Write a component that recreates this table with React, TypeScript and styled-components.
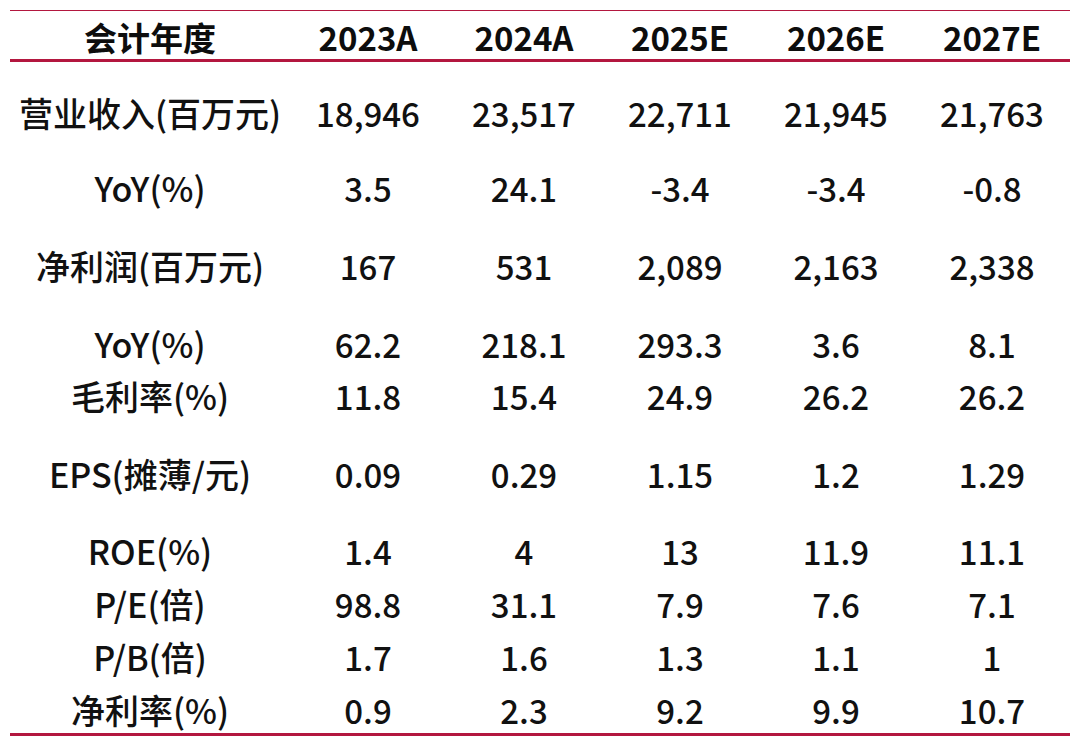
import React from "react";
import styled, { createGlobalStyle } from "styled-components";

const GlobalStyle = createGlobalStyle`
  html, body {
    margin: 0;
    padding: 0;
    background: #ffffff;
  }
  body {
    font-family: "Noto Sans CJK SC", "Noto Sans", sans-serif;
    color: #111111;
  }
`;

const Page = styled.div`
  width: 1080px;
  height: 748px;
  box-sizing: border-box;
  padding: 10px 10px 0;
  background: #ffffff;
`;

const Table = styled.div`
  width: 1060px;
  border-top: 1.5px solid #b3173f;
  border-bottom: 3px solid #b3173f;
  padding-bottom: 3px;
`;

const HeaderRow = styled.div`
  display: grid;
  grid-template-columns: 280px repeat(5, 156px);
  align-items: center;
  height: 51px;
  padding-top: 3px;
  box-sizing: border-box;
  border-bottom: 3px solid #b3173f;
`;

const HeadCell = styled.div`
  text-align: center;
  font-weight: 700;
  font-size: 33px;
  line-height: 40px;
  color: #0d0d0d;
  white-space: nowrap;
`;

const Row = styled.div<{ $space: number }>`
  display: grid;
  grid-template-columns: 280px repeat(5, 156px);
  align-items: center;
  height: 40px;
  margin-top: ${(p) => p.$space}px;
`;

const Cell = styled.div<{ $label?: boolean }>`
  text-align: center;
  font-weight: 500;
  font-size: ${(p) => (p.$label ? 34 : 33)}px;
  line-height: 40px;
  color: #111111;
  white-space: nowrap;
`;

const years = ["2023A", "2024A", "2025E", "2026E", "2027E"];

const rows: { label: string; values: string[]; space: number }[] = [
  { label: "营业收入(百万元)", values: ["18,946", "23,517", "22,711", "21,945", "21,763"], space: 31 },
  { label: "YoY(%)", values: ["3.5", "24.1", "-3.4", "-3.4", "-0.8"], space: 35 },
  { label: "净利润(百万元)", values: ["167", "531", "2,089", "2,163", "2,338"], space: 38 },
  { label: "YoY(%)", values: ["62.2", "218.1", "293.3", "3.6", "8.1"], space: 38 },
  { label: "毛利率(%)", values: ["11.8", "15.4", "24.9", "26.2", "26.2"], space: 12 },
  { label: "EPS(摊薄/元)", values: ["0.09", "0.29", "1.15", "1.2", "1.29"], space: 38 },
  { label: "ROE(%)", values: ["1.4", "4", "13", "11.9", "11.1"], space: 37 },
  { label: "P/E(倍)", values: ["98.8", "31.1", "7.9", "7.6", "7.1"], space: 13 },
  { label: "P/B(倍)", values: ["1.7", "1.6", "1.3", "1.1", "1"], space: 13 },
  { label: "净利率(%)", values: ["0.9", "2.3", "9.2", "9.9", "10.7"], space: 13 },
];

const App = (): React.ReactElement => {
  return (
    <Page>
      <GlobalStyle />
      <Table>
        <HeaderRow>
          <HeadCell>会计年度</HeadCell>
          {years.map((y) => (
            <HeadCell key={y}>{y}</HeadCell>
          ))}
        </HeaderRow>
        {rows.map((r, i) => (
          <Row key={i} $space={r.space}>
            <Cell $label>{r.label}</Cell>
            {r.values.map((v, j) => (
              <Cell key={j}>{v}</Cell>
            ))}
          </Row>
        ))}
      </Table>
    </Page>
  );
};

export default App;
